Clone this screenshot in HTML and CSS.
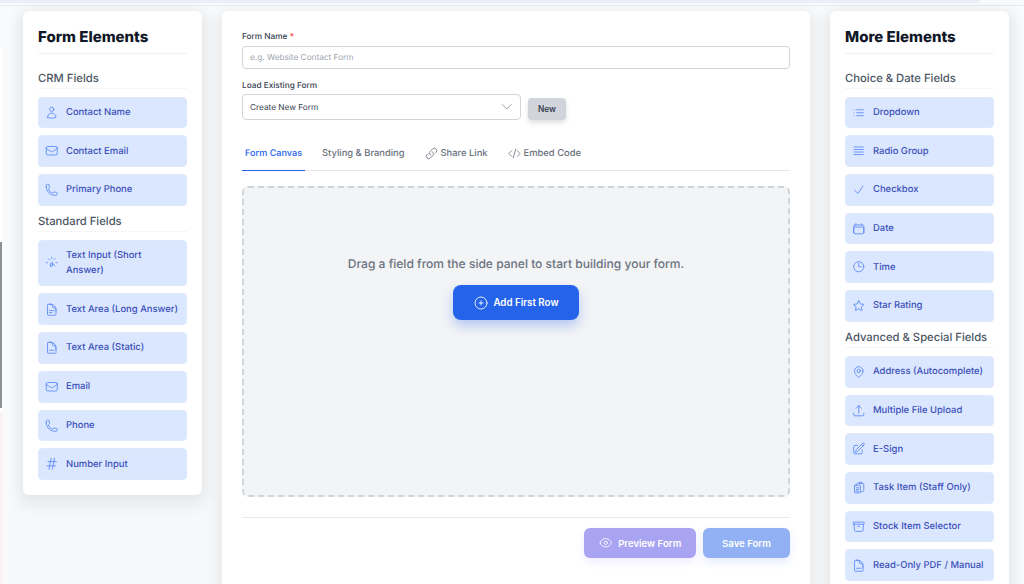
FILE: index.html
```html
<!DOCTYPE html>
<html lang="en">
<head>
    <meta charset="UTF-8">
    <meta name="viewport" content="width=device-width, initial-scale=1.0">
    <title>Form Builder</title>
    <link rel="stylesheet" href="styles.css">
</head>
<body>
    <svg class="icon-defs" width="0" height="0">
        <symbol id="i-user" viewBox="0 0 24 24"><path d="M15.75 6a3.75 3.75 0 1 1-7.5 0 3.75 3.75 0 0 1 7.5 0ZM4.5 20.1a7.5 7.5 0 0 1 15 0A18 18 0 0 1 12 21.75c-2.7 0-5.2-.6-7.5-1.65Z"/></symbol>
        <symbol id="i-mail" viewBox="0 0 24 24"><path d="M21.75 6.75v10.5a2.25 2.25 0 0 1-2.25 2.25h-15a2.25 2.25 0 0 1-2.25-2.25V6.75m19.5 0A2.25 2.25 0 0 0 19.5 4.5h-15a2.25 2.25 0 0 0-2.25 2.25m19.5 0v.24a2.25 2.25 0 0 1-1.07 1.92l-7.5 4.61a2.25 2.25 0 0 1-2.36 0l-7.5-4.61a2.25 2.25 0 0 1-1.07-1.92v-.24"/></symbol>
        <symbol id="i-phone" viewBox="0 0 24 24"><path d="M2.25 6.75c0 8.28 6.72 15 15 15h2.25a2.25 2.25 0 0 0 2.25-2.25v-1.37c0-.52-.35-.97-.85-1.09l-4.42-1.1c-.44-.11-.9.05-1.17.41l-.97 1.29c-.28.38-.77.54-1.21.38a12 12 0 0 1-7.14-7.14c-.16-.44 0-.93.38-1.21l1.29-.97c.36-.27.52-.73.41-1.17l-1.1-4.42A1.13 1.13 0 0 0 6.88 2.25H4.5A2.25 2.25 0 0 0 2.25 4.5v2.25Z"/></symbol>
        <symbol id="i-cursor" viewBox="0 0 24 24"><path d="m15 15-2.25 1.5.75-5.25-4.5 3 1.5 5.25 1.5-2.25L15 15ZM12 2.25V4.5m5.8-.05-1.6 1.6M21.75 12H19.5m-1.7 5.8-1.6-1.6M6.2 5.2l1.6 1.6M4.5 12H2.25"/></symbol>
        <symbol id="i-doc" viewBox="0 0 24 24"><path d="M19.5 14.25v-2.63a3.38 3.38 0 0 0-3.38-3.37h-1.5A1.13 1.13 0 0 1 13.5 7.13v-1.5a3.38 3.38 0 0 0-3.38-3.38H8.25m2.25 0H5.63c-.62 0-1.13.5-1.13 1.13v17.25c0 .62.5 1.12 1.13 1.12h12.75c.62 0 1.12-.5 1.12-1.13V11.25a9 9 0 0 0-9-9Z"/><path d="M8 13.5h8M8 17h4.5"/></symbol>
        <symbol id="i-docline" viewBox="0 0 24 24"><path d="M19.5 14.25v-2.63a3.38 3.38 0 0 0-3.38-3.37h-1.5A1.13 1.13 0 0 1 13.5 7.13v-1.5a3.38 3.38 0 0 0-3.38-3.38H8.25m2.25 0H5.63c-.62 0-1.13.5-1.13 1.13v17.25c0 .62.5 1.12 1.13 1.12h12.75c.62 0 1.12-.5 1.12-1.13V11.25a9 9 0 0 0-9-9Z"/><path d="M8 16.5h8"/></symbol>
        <symbol id="i-hash" viewBox="0 0 24 24"><path d="M5.25 8.25h15m-16.5 7.5h15m-1.8-13.5-3.9 19.5m-2.1-19.5-3.9 19.5"/></symbol>
        <symbol id="i-list" viewBox="0 0 24 24"><path d="M8.25 6.75h12M8.25 12h12m-12 5.25h12M3.75 6.75h.01M3.75 12h.01M3.75 17.25h.01"/></symbol>
        <symbol id="i-queue" viewBox="0 0 24 24"><path d="M3.75 5.25h16.5m-16.5 4.5h16.5m-16.5 4.5h16.5m-16.5 4.5h16.5"/></symbol>
        <symbol id="i-check" viewBox="0 0 24 24"><path d="m4.5 12.75 6 6 9-13.5"/></symbol>
        <symbol id="i-calendar" viewBox="0 0 24 24"><path d="M6.75 3v2.25M17.25 3v2.25M3 18.75V7.5a2.25 2.25 0 0 1 2.25-2.25h13.5A2.25 2.25 0 0 1 21 7.5v11.25M3 18.75A2.25 2.25 0 0 0 5.25 21h13.5A2.25 2.25 0 0 0 21 18.75M3 18.75v-7.5A2.25 2.25 0 0 1 5.25 9h13.5A2.25 2.25 0 0 1 21 11.25v7.5"/></symbol>
        <symbol id="i-clock" viewBox="0 0 24 24"><path d="M12 6v6h4.5m4.5 0a9 9 0 1 1-18 0 9 9 0 0 1 18 0Z"/></symbol>
        <symbol id="i-star" viewBox="0 0 24 24"><path d="M11.48 3.5a.56.56 0 0 1 1.04 0l2.13 5.11c.08.2.27.33.48.35l5.52.44c.5.04.7.66.32.99l-4.2 3.6a.56.56 0 0 0-.19.56l1.29 5.38a.56.56 0 0 1-.84.61l-4.73-2.88a.56.56 0 0 0-.59 0l-4.73 2.88a.56.56 0 0 1-.84-.61l1.29-5.38a.56.56 0 0 0-.18-.56l-4.21-3.6a.56.56 0 0 1 .32-.99l5.52-.44c.21-.02.4-.15.48-.35L11.48 3.5Z"/></symbol>
        <symbol id="i-pin" viewBox="0 0 24 24"><path d="M15 10.5a3 3 0 1 1-6 0 3 3 0 0 1 6 0Z"/><path d="M19.5 10.5c0 7.14-7.5 11.25-7.5 11.25S4.5 17.64 4.5 10.5a7.5 7.5 0 1 1 15 0Z"/></symbol>
        <symbol id="i-upload" viewBox="0 0 24 24"><path d="M3 16.5v2.25A2.25 2.25 0 0 0 5.25 21h13.5A2.25 2.25 0 0 0 21 18.75V16.5m-13.5-9L12 3m0 0 4.5 4.5M12 3v13.5"/></symbol>
        <symbol id="i-pencil" viewBox="0 0 24 24"><path d="m16.86 4.49 1.69-1.69a1.88 1.88 0 1 1 2.65 2.65L10.58 16.07a4.5 4.5 0 0 1-1.9 1.13L6 18l.8-2.68a4.5 4.5 0 0 1 1.13-1.9l8.93-8.93Zm0 0L19.5 7.13M18 14v4.75A2.25 2.25 0 0 1 15.75 21H5.25A2.25 2.25 0 0 1 3 18.75V8.25A2.25 2.25 0 0 1 5.25 6H10"/></symbol>
        <symbol id="i-clipboard" viewBox="0 0 24 24"><path d="M8.25 7.5V6.1c0-1.13.84-2.1 1.97-2.2a48 48 0 0 1 3.55-.2m3.98 0c.42.06.83.12 1.25.2 1.13.1 1.97 1.07 1.97 2.2V16.5a2.25 2.25 0 0 1-2.25 2.25h-1.5M13.5 3.75A1.5 1.5 0 0 1 15 2.25h1.5a1.5 1.5 0 0 1 1.5 1.5v.75h-4.5v-.75ZM5.63 7.5h8.25c.62 0 1.12.5 1.12 1.13v11.25c0 .62-.5 1.12-1.13 1.12H5.63c-.62 0-1.13-.5-1.13-1.13V8.63c0-.62.5-1.13 1.13-1.13ZM7.5 12h4.5M7.5 15h4.5M7.5 18h4.5"/></symbol>
        <symbol id="i-archive" viewBox="0 0 24 24"><path d="m20.25 7.5-.63 10.63a2.25 2.25 0 0 1-2.25 2.12H6.63a2.25 2.25 0 0 1-2.25-2.12L3.75 7.5M10 11.25h4M3.38 7.5h17.25c.62 0 1.12-.5 1.12-1.13v-1.5c0-.62-.5-1.12-1.12-1.12H3.38c-.62 0-1.13.5-1.13 1.13v1.5c0 .62.5 1.12 1.13 1.12Z"/></symbol>
        <symbol id="i-link" viewBox="0 0 24 24"><path d="M13.19 8.69a4.5 4.5 0 0 1 1.24 7.24l-4.5 4.5a4.5 4.5 0 0 1-6.36-6.36l1.76-1.76m13.35-.62 1.76-1.76a4.5 4.5 0 0 0-6.36-6.36l-4.5 4.5a4.5 4.5 0 0 0 1.24 7.24"/></symbol>
        <symbol id="i-code" viewBox="0 0 24 24"><path d="M17.25 6.75 22.5 12l-5.25 5.25m-10.5 0L1.5 12l5.25-5.25m7.5-3-4.5 16.5"/></symbol>
        <symbol id="i-plus" viewBox="0 0 24 24"><path d="M12 9v6m3-3H9m12 0a9 9 0 1 1-18 0 9 9 0 0 1 18 0Z"/></symbol>
        <symbol id="i-eye" viewBox="0 0 24 24"><path d="M2.04 12.32a1 1 0 0 1 0-.64C3.42 7.51 7.36 4.5 12 4.5s8.57 3 9.96 7.18c.07.2.07.43 0 .64C20.58 16.49 16.64 19.5 12 19.5s-8.58-3-9.96-7.18Z"/><path d="M15 12a3 3 0 1 1-6 0 3 3 0 0 1 6 0Z"/></symbol>
    </svg>

    <div class="topbar"><div class="topbar-fill"></div></div>
    <div class="edge-window"><div class="edge-scroll"></div></div>
    <div class="edge-pink"></div>
    <div class="ghost-panel"></div>

    <div class="layout">
        <aside class="panel">
            <h2>Form Elements</h2>
            <h3>CRM Fields</h3>
            <div class="field"><svg class="icon"><use href="#i-user"/></svg><span>Contact Name</span></div>
            <div class="field"><svg class="icon"><use href="#i-mail"/></svg><span>Contact Email</span></div>
            <div class="field"><svg class="icon"><use href="#i-phone"/></svg><span>Primary Phone</span></div>
            <h3>Standard Fields</h3>
            <div class="field tall"><svg class="icon"><use href="#i-cursor"/></svg><span>Text Input (Short Answer)</span></div>
            <div class="field"><svg class="icon"><use href="#i-doc"/></svg><span>Text Area (Long Answer)</span></div>
            <div class="field"><svg class="icon"><use href="#i-docline"/></svg><span>Text Area (Static)</span></div>
            <div class="field"><svg class="icon"><use href="#i-mail"/></svg><span>Email</span></div>
            <div class="field"><svg class="icon"><use href="#i-phone"/></svg><span>Phone</span></div>
            <div class="field"><svg class="icon"><use href="#i-hash"/></svg><span>Number Input</span></div>
        </aside>

        <main class="builder">
            <label class="form-label">Form Name <em>*</em></label>
            <div class="text-input">e.g. Website Contact Form</div>

            <label class="form-label second">Load Existing Form</label>
            <div class="load-row">
                <div class="select-box">
                    <span>Create New Form</span>
                    <svg class="chevron" viewBox="0 0 24 24"><path d="m4 8 8 8 8-8"/></svg>
                </div>
                <button class="btn-new">New</button>
            </div>

            <nav class="tabs">
                <a class="tab active">Form Canvas</a>
                <a class="tab">Styling &amp; Branding</a>
                <a class="tab"><svg class="tab-icon"><use href="#i-link"/></svg>Share Link</a>
                <a class="tab"><svg class="tab-icon"><use href="#i-code"/></svg>Embed Code</a>
            </nav>

            <section class="canvas">
                <p>Drag a field from the side panel to start building your form.</p>
                <button class="btn-add"><svg class="btn-icon-lg"><use href="#i-plus"/></svg>Add First Row</button>
            </section>

            <footer class="actions">
                <button class="btn-preview"><svg class="btn-icon"><use href="#i-eye"/></svg>Preview Form</button>
                <button class="btn-save">Save Form</button>
            </footer>
        </main>

        <aside class="panel">
            <h2>More Elements</h2>
            <h3>Choice &amp; Date Fields</h3>
            <div class="field"><svg class="icon"><use href="#i-list"/></svg><span>Dropdown</span></div>
            <div class="field"><svg class="icon"><use href="#i-queue"/></svg><span>Radio Group</span></div>
            <div class="field"><svg class="icon"><use href="#i-check"/></svg><span>Checkbox</span></div>
            <div class="field"><svg class="icon"><use href="#i-calendar"/></svg><span>Date</span></div>
            <div class="field"><svg class="icon"><use href="#i-clock"/></svg><span>Time</span></div>
            <div class="field"><svg class="icon"><use href="#i-star"/></svg><span>Star Rating</span></div>
            <h3>Advanced &amp; Special Fields</h3>
            <div class="field"><svg class="icon"><use href="#i-pin"/></svg><span>Address (Autocomplete)</span></div>
            <div class="field"><svg class="icon"><use href="#i-upload"/></svg><span>Multiple File Upload</span></div>
            <div class="field"><svg class="icon"><use href="#i-pencil"/></svg><span>E-Sign</span></div>
            <div class="field"><svg class="icon"><use href="#i-clipboard"/></svg><span>Task Item (Staff Only)</span></div>
            <div class="field"><svg class="icon"><use href="#i-archive"/></svg><span>Stock Item Selector</span></div>
            <div class="field"><svg class="icon"><use href="#i-docline"/></svg><span>Read-Only PDF / Manual</span></div>
        </aside>
    </div>
</body>
</html>
```

FILE: styles.css
```css
* { box-sizing: border-box; }
html, body { height: 100%; }
body { margin: 0; overflow: hidden; background: #f9fafb; color: #1f2937; font-family: Inter, "Liberation Sans", sans-serif; text-rendering: geometricPrecision; }
svg { fill: none; stroke: currentColor; stroke-width: 1.5; stroke-linecap: round; stroke-linejoin: round; }
.icon-defs { position: absolute; }

.topbar { height: 6px; border-bottom: 1px solid #e9ebf0; background: #f9fafb; }
.topbar-fill { width: 980px; height: 3px; background: #eceffa; }

/* bits of the window behind, showing at the left edge */
.edge-window { position: absolute; left: 0; top: 47px; width: 3px; height: 365px; background: #fff; }
.edge-scroll { width: 2px; height: 166px; margin-top: 195px; background: #8f9092; }
.edge-pink { position: absolute; left: 0; top: 412px; bottom: 0; width: 3px; background: #fbf0f4; }
.ghost-panel { position: absolute; left: 9px; top: 505px; width: 203px; height: 100px; background: #f7f8fa; border-radius: 8px; }

.layout { position: relative; display: flex; align-items: flex-start; gap: 20px; padding: 5px 15px 0 23px; }

.panel { flex: 0 0 179px; padding: 15px; background: #fff; border-radius: 6px; box-shadow: 0 5px 14px 5px rgba(0, 0, 0, 0.08); }
.panel h2 { margin: 0 0 16px; padding: 1px 0 6px; border-bottom: 1px solid #f0f1f3; color: #111827; font-size: 15px; font-weight: 800; line-height: 20px; }
.panel h3 { margin: 0 0 7.6px; padding-bottom: 2px; border-bottom: 1px solid #f6f6f7; color: #4b5563; font-size: 11.25px; font-weight: 500; line-height: 16px; }
.field + h3 { margin-top: 3px; margin-bottom: 8.3px; }

.field { display: flex; align-items: center; gap: 7.5px; min-height: 31.7px; margin-bottom: 7px; padding: 4px 5px 4px 6px; background: #dae7fe; border: 1px solid #dfeafe; border-radius: 4px; color: #3c50ba; font-size: 9.45px; font-weight: 500; line-height: 15px; }
.field.tall { min-height: 46.5px; }
.field:last-child { margin-bottom: 0; }
.icon { flex: 0 0 13.5px; width: 13.5px; height: 13.5px; color: #5a87f5; }

.builder { flex: 0 0 588px; height: 600px; padding: 19px 20px; background: #fff; border-radius: 6px; box-shadow: 0 5px 14px 5px rgba(0, 0, 0, 0.07); }
.form-label { display: block; margin-bottom: 3.5px; color: #374151; font-size: 8.25px; font-weight: 500; line-height: 12px; }
.form-label em { color: #ef4444; font-style: normal; }
.form-label.second { margin-top: 10px; margin-bottom: 3px; }
.text-input { height: 23.5px; padding: 0 7px; border: 1px solid #d1d5db; border-radius: 4px; color: #9ca3af; font-size: 8.25px; line-height: 21.5px; }

.load-row { display: flex; align-items: flex-end; gap: 7px; }
.select-box { display: flex; flex: 0 0 279px; align-items: center; justify-content: space-between; height: 26px; padding: 0 7px; border: 1px solid #d1d5db; border-radius: 4px; color: #374151; font-size: 8.25px; }
.chevron { width: 13.5px; height: 13.5px; color: #6b7280; stroke-width: 1.2; }
.btn-new { width: 38px; height: 22.5px; padding: 0; border: 0; border-radius: 4px; background: #d1d5db; box-shadow: 0 3px 5px rgba(0, 0, 0, 0.12); color: #374151; font: 600 8.25px Inter, sans-serif; }

.tabs { display: flex; gap: 14px; margin-top: 18px; border-bottom: 1px solid #e5e7eb; }
.tab { display: flex; align-items: center; gap: 3px; height: 32px; padding: 0 3px 2px; color: #6b7280; font-size: 9.4px; font-weight: 500; }
.tab.active { height: 33px; margin-bottom: -1px; padding-bottom: 2px; border-bottom: 1px solid #2563eb; color: #2563eb; font-size: 9.1px; }
.tab-icon { width: 13px; height: 13px; }

.canvas { display: flex; flex-direction: column; align-items: center; height: 311px; margin-top: 15px; padding-top: 67px; background: #f3f4f6; border: 2px dashed #d1d5db; border-radius: 6px; }
.canvas p { margin: 0 0 12px; color: #6b7280; font-size: 12.05px; font-weight: 500; line-height: 18px; }
.btn-add, .btn-preview, .btn-save { display: flex; align-items: center; justify-content: center; border: 0; border-radius: 6px; color: #fff; font: 600 9.6px Inter, sans-serif; }
.btn-add { gap: 4px; width: 126px; height: 35px; background: #2563eb; border-radius: 8px; box-shadow: 0 6px 12px rgba(37, 99, 235, 0.3); font-size: 9.75px; }
.btn-icon-lg { width: 16px; height: 16px; stroke-width: 1.3; }
.btn-icon { width: 13.5px; height: 13.5px; }

.actions { display: flex; justify-content: flex-end; gap: 7px; margin-top: 20px; padding-top: 10px; border-top: 1px solid #e9eaec; }
.btn-preview { gap: 6px; width: 112px; height: 30px; background: #a8a4f1; box-shadow: 0 4px 8px rgba(139, 92, 246, 0.12); }
.btn-save { width: 87px; height: 30px; background: #92b1f5; box-shadow: 0 4px 8px rgba(37, 99, 235, 0.12); }
```
